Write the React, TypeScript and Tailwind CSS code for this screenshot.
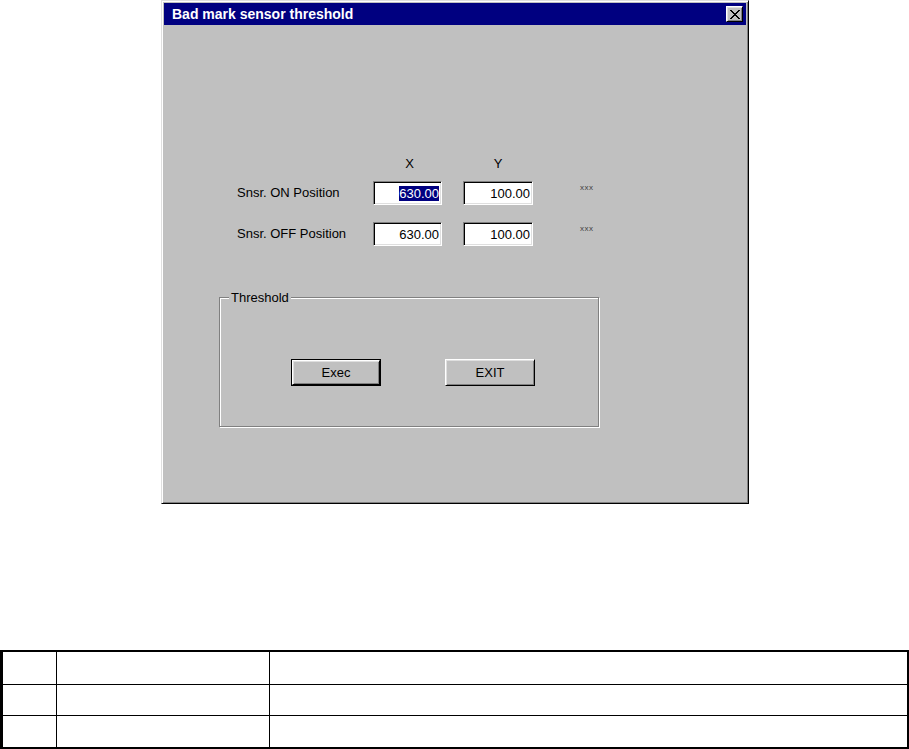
import React from "react";

const font = { fontFamily: '"Liberation Sans", Arial, sans-serif' };

function Field({ value, selected }: { value: string; selected?: boolean }) {
  return (
    <div className="h-[24px] border border-t-[#808080] border-l-[#808080] border-b-white border-r-white bg-white shadow-[inset_1px_1px_0_#000,inset_-1px_-1px_0_#dfdfdf] flex items-center justify-end pr-[2px] text-[13px] leading-[15px] text-black">
      {selected ? (
        <span className="bg-[#000080] text-white">{value}</span>
      ) : (
        <span>{value}</span>
      )}
    </div>
  );
}

function Row({ label, x, y, selected, className }: { label: string; x: string; y: string; selected?: boolean; className?: string }) {
  return (
    <div className={"flex ml-[73px] h-[24px] " + (className ?? "")}>
      <div className="w-[136px] flex items-center text-[13px] leading-[15px] -mt-[2px]">{label}</div>
      <div className="w-[69px]">
        <Field value={x} selected={selected} />
      </div>
      <div className="w-[21px]" />
      <div className="w-[70px]">
        <Field value={y} />
      </div>
      <div className="w-[47px]" />
      <div className="mt-[3px] text-[8px] leading-[8px] text-[#404040] tracking-[0.5px]">xxx</div>
    </div>
  );
}

function Button({ children, isDefault }: { children: React.ReactNode; isDefault?: boolean }) {
  if (isDefault) {
    return (
      <div className="w-[90px] h-[27px] border border-black">
        <div className="w-full h-full border border-t-white border-l-white border-b-black border-r-black shadow-[inset_1px_1px_0_#dfdfdf,inset_-1px_-1px_0_#808080] bg-[#c0c0c0] flex items-center justify-center text-[13px] leading-[15px]">
          {children}
        </div>
      </div>
    );
  }
  return (
    <div className="w-[90px] h-[27px] border border-t-white border-l-white border-b-black border-r-black shadow-[inset_1px_1px_0_#dfdfdf,inset_-1px_-1px_0_#808080] bg-[#c0c0c0] flex items-center justify-center text-[13px] leading-[15px]">
      {children}
    </div>
  );
}

export default function App() {
  return (
    <div className="w-[909px] h-[749px] bg-white overflow-hidden text-black" style={font}>
      {/* Dialog window */}
      <div className="ml-[161px] w-[588px] h-[504px] bg-[#c0c0c0] border border-t-[#dfdfdf] border-l-[#dfdfdf] border-b-black border-r-black shadow-[inset_1px_1px_0_#fff,inset_-1px_-1px_0_#808080] p-[2px] flex flex-col">
        {/* Title bar */}
        <div className="h-[22px] bg-[#000080] flex items-center justify-between pl-[8px] pr-[3px]">
          <span className="text-white font-bold text-[14px] leading-[16px]">Bad mark sensor threshold</span>
          <div className="w-[17px] h-[16px] bg-[#c0c0c0] border border-t-white border-l-white border-b-black border-r-black shadow-[inset_1px_1px_0_#dfdfdf,inset_-1px_-1px_0_#808080] flex items-center justify-center">
            <svg width="10" height="9" viewBox="0 0 10 9" shapeRendering="crispEdges">
              <path d="M0 0h2v1h1v1h1v1h2v-1h1v-1h1v-1h2v1h-1v1h-1v1h-1v1h-1v1h1v1h1v1h1v1h1v1h-2v-1h-1v-1h-1v-1h-2v1h-1v1h-1v1h-2v-1h1v-1h1v-1h1v-1h1v-1h-1v-1h-1v-1h-1z" fill="#000" />
            </svg>
          </div>
        </div>

        {/* Client area */}
        <div className="flex flex-col pt-[130px]">
          <div className="flex ml-[73px] h-[16px] items-center text-[13px] leading-[15px]">
            <div className="w-[136px]" />
            <div className="w-[69px] text-center pl-[4px]">X</div>
            <div className="w-[21px]" />
            <div className="w-[70px] text-center">Y</div>
          </div>
          <Row className="mt-[10px]" label="Snsr. ON Position" x="630.00" y="100.00" selected />
          <Row className="mt-[17px]" label="Snsr. OFF Position" x="630.00" y="100.00" />

          {/* Group box */}
          <div className="relative ml-[55px] mt-[51px] w-[380px] h-[130px] border border-[#808080] shadow-[inset_1px_1px_0_#fff,1px_1px_0_#fff]">
            <span className="absolute -top-[8px] left-[9px] px-[2px] bg-[#c0c0c0] text-[13px] leading-[15px]">Threshold</span>
            <div className="flex pt-[61px] pl-[71px] gap-[64px]">
              <Button isDefault>Exec</Button>
              <Button>EXIT</Button>
            </div>
          </div>
        </div>
      </div>

      {/* Table */}
      <div className="mt-[146px] w-[909px] border-l-[3px] border-t-2 border-r-2 border-b-2 border-black">
        <div className="grid grid-cols-[54px_213px_1fr] h-[33px] border-b border-black">
          <div className="border-r border-black" />
          <div className="border-r border-black" />
          <div />
        </div>
        <div className="grid grid-cols-[54px_213px_1fr] h-[31px] border-b border-black">
          <div className="border-r border-black" />
          <div className="border-r border-black" />
          <div />
        </div>
        <div className="grid grid-cols-[54px_213px_1fr] h-[31px]">
          <div className="border-r border-black" />
          <div className="border-r border-black" />
          <div />
        </div>
      </div>
    </div>
  );
}
